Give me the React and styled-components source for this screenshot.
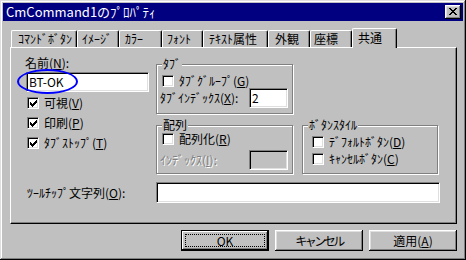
import React from 'react';
import styled, { createGlobalStyle, css } from 'styled-components';

const FONT = `"Noto Sans CJK JP", "Noto Sans", sans-serif`;

const GlobalStyle = createGlobalStyle`
  html, body { margin: 0; padding: 0; background: #c0c0c0; }
  body { font-family: ${FONT}; font-size: 12px; color: #000; }
  * { box-sizing: border-box; }
  u { text-decoration-thickness: 1px; text-underline-offset: 1px; }
`;

const Window = styled.div`
  width: 466px;
  height: 260px;
  background: #c0c0c0;
  padding: 3px;
  box-shadow: inset -1px -1px #000, inset 1px 1px #dfdfdf, inset -2px -2px #808080, inset 2px 2px #fff;
  display: flex;
  flex-direction: column;
`;

const TitleBar = styled.div`
  height: 18px;
  background: #000080;
  color: #fff;
  display: flex;
  align-items: center;
  justify-content: space-between;
  padding: 0 2px 0 3px;
  font-size: 13px;
  line-height: 18px;
  white-space: nowrap;
`;

const raised = css`
  background: #c0c0c0;
  box-shadow: inset -1px -1px #000, inset 1px 1px #fff, inset -2px -2px #808080, inset 2px 2px #dfdfdf;
`;

const sunken = css`
  border: 1px solid;
  border-color: #808080 #fff #fff #808080;
  box-shadow: inset 1px 1px #000, inset -1px -1px #dfdfdf;
`;

const CloseButton = styled.div`
  ${raised};
  width: 16px;
  height: 14px;
  display: flex;
  align-items: center;
  justify-content: center;
  padding: 0 0 1px 0;
`;

const Body = styled.div`
  padding: 7px 0 0 7px;
  display: flex;
  flex-direction: column;
`;

const TabStrip = styled.div`
  height: 19px;
  display: flex;
  align-items: flex-end;
  padding-left: 1px;
`;

const Tab = styled.div`
  width: ${p => p.$w}px;
  height: ${p => (p.$active ? 20 : 17)}px;
  margin-bottom: ${p => (p.$active ? -1 : 0)}px;
  padding-left: ${p => p.$pl ?? 6}px;
  background: #c0c0c0;
  border-top: 1px solid #fff;
  border-left: 1px solid #fff;
  border-right: 1px solid #000;
  border-radius: 2px 2px 0 0;
  box-shadow: inset -1px 0 #808080;
  line-height: ${p => (p.$active ? 17 : 16)}px;
  white-space: nowrap;
  position: relative;
  z-index: ${p => (p.$active ? 2 : 0)};
`;

const Panel = styled.div`
  width: 447px;
  height: 177px;
  border-top: 1px solid #fff;
  border-left: 1px solid #fff;
  border-right: 1px solid #000;
  border-bottom: 1px solid #000;
  box-shadow: inset -1px -1px #808080;
  padding: 8px 0 0 14px;
  display: flex;
  flex-direction: column;
`;

const TopRow = styled.div`
  display: flex;
  align-items: flex-start;
`;

const LeftCol = styled.div`
  width: 131px;
  display: flex;
  flex-direction: column;
`;

const Label = styled.div`
  height: 14px;
  line-height: 14px;
  white-space: nowrap;
  margin-left: ${p => p.$ml ?? 0}px;
`;

const NameField = styled.div`
  position: relative;
  margin: 2px 0 0 1px;
  width: 123px;
  height: 20px;
`;

const TextBox = styled.div`
  ${sunken};
  width: ${p => p.$w}px;
  height: ${p => p.$h ?? 20}px;
  background: ${p => (p.$disabled ? '#c0c0c0' : '#fff')};
  padding: 0 0 0 2px;
  line-height: 18px;
  flex: none;
`;

const Ellipse = styled.div`
  position: absolute;
  left: -9px;
  top: -3px;
  width: 61px;
  height: 25px;
  border: 2px solid #0000ff;
  border-radius: 50%;
  pointer-events: none;
`;

const CheckRow = styled.div`
  display: flex;
  align-items: center;
  height: 14px;
  gap: 5px;
  margin-top: ${p => p.$mt ?? 0}px;
  margin-left: ${p => p.$ml ?? 0}px;
  white-space: nowrap;
  line-height: 14px;
`;

const Box = styled.div`
  ${sunken};
  width: 12px;
  height: 12px;
  background: #fff;
  display: flex;
  align-items: center;
  justify-content: center;
  flex: none;
`;

const MidCol = styled.div`
  width: 137px;
  margin-top: 8px;
  display: flex;
  flex-direction: column;
`;

const RightCol = styled.div`
  width: 136px;
  margin: 69px 0 0 9px;
`;

const Group = styled.div`
  position: relative;
  height: ${p => p.$h}px;
  margin-top: ${p => p.$mt ?? 0}px;
  border: 1px solid #808080;
  box-shadow: inset 1px 1px #fff, 1px 1px #fff;
  display: flex;
  flex-direction: column;
`;

const GroupTitle = styled.div`
  position: absolute;
  left: 5px;
  top: -8px;
  padding: 0 1px;
  background: #c0c0c0;
  line-height: 14px;
  white-space: nowrap;
`;

const FieldRow = styled.div`
  display: flex;
  align-items: center;
  margin-top: ${p => p.$mt ?? 0}px;
  padding-left: ${p => p.$pl ?? 3}px;
`;

const FieldLabel = styled.div`
  width: ${p => p.$w}px;
  white-space: nowrap;
  line-height: 14px;
  flex: none;
  ${p =>
    p.$disabled &&
    css`
      color: #808080;
      text-shadow: 1px 1px 0 #fff;
    `}
`;

const ButtonRow = styled.div`
  width: 447px;
  margin-top: 6px;
  display: flex;
  justify-content: flex-end;
  gap: 6px;
`;

const Button = styled.div`
  ${raised};
  width: 88px;
  height: 21px;
  display: flex;
  align-items: center;
  justify-content: center;
  line-height: 14px;
  position: relative;
  letter-spacing: ${p => p.$ls ?? 0}px;
  ${p =>
    p.$default &&
    css`
      box-shadow: inset 0 0 0 1px #000, inset -2px -2px #000, inset 2px 2px #fff, inset -3px -3px #808080;
    `}
`;

const Focus = styled.div`
  position: absolute;
  inset: 4px;
  border: 1px dotted #000;
  pointer-events: none;
`;

const CHECK = ['......#', '.....##', '#...###', '##.###.', '#####..', '.###...', '..#....'];
const XG = ['##....##', '.##..##.', '..####..', '...##...', '..####..', '.##..##.', '##....##'];

const Pixels = ({ rows }) => (
  <svg width={rows[0].length} height={rows.length} shapeRendering="crispEdges">
    {rows.flatMap((r, y) =>
      r.split('').map((c, x) => (c === '#' ? <rect key={`${x}-${y}`} x={x} y={y} width="1" height="1" fill="#000" /> : null))
    )}
  </svg>
);

const Check = ({ checked, children, mt, ml }) => (
  <CheckRow $mt={mt} $ml={ml}>
    <Box>{checked && <Pixels rows={CHECK} />}</Box>
    <span>{children}</span>
  </CheckRow>
);

const tabs = [
  { t: 'ｺﾏﾝﾄﾞﾎﾞﾀﾝ', w: 66, pl: 6 },
  { t: 'ｲﾒｰｼﾞ', w: 42, pl: 4 },
  { t: 'ｶﾗｰ', w: 43, pl: 5 },
  { t: 'ﾌｫﾝﾄ', w: 41, pl: 4 },
  { t: 'ﾃｷｽﾄ属性', w: 65, pl: 5 },
  { t: '外観', w: 42, pl: 6 },
  { t: '座標', w: 42, pl: 3 },
  { t: '共通', w: 45, pl: 5, active: true },
];

export default function App() {
  return (
    <>
      <GlobalStyle />
      <Window>
        <TitleBar>
          <span>CmCommand1のﾌﾟﾛﾊﾟﾃｨ</span>
          <CloseButton>
            <Pixels rows={XG} />
          </CloseButton>
        </TitleBar>
        <Body>
          <TabStrip>
            {tabs.map(tb => (
              <Tab key={tb.t} $w={tb.w} $pl={tb.pl} $active={tb.active}>
                {tb.t}
              </Tab>
            ))}
          </TabStrip>
          <Panel>
            <TopRow>
              <LeftCol>
                <Label>
                  名前(<u>N</u>):
                </Label>
                <NameField>
                  <TextBox $w={123}>BT-OK</TextBox>
                  <Ellipse />
                </NameField>
                <Check checked mt={4} ml={2}>
                  可視(<u>V</u>)
                </Check>
                <Check checked mt={6} ml={2}>
                  印刷(<u>P</u>)
                </Check>
                <Check checked mt={6} ml={2}>
                  ﾀﾌﾞｽﾄｯﾌﾟ(<u>T</u>)
                </Check>
              </LeftCol>
              <MidCol>
                <Group $h={50}>
                  <GroupTitle>ﾀﾌﾞ</GroupTitle>
                  <Check mt={9} ml={5}>
                    ﾀﾌﾞｸﾞﾙｰﾌﾟ(<u>G</u>)
                  </Check>
                  <FieldRow>
                    <FieldLabel $w={89}>
                      ﾀﾌﾞｲﾝﾃﾞｯｸｽ(<u>X</u>):
                    </FieldLabel>
                    <TextBox $w={39}>2</TextBox>
                  </FieldRow>
                </Group>
                <Group $h={49} $mt={11}>
                  <GroupTitle>配列</GroupTitle>
                  <Check mt={6} ml={5}>
                    配列化(<u>R</u>)
                  </Check>
                  <FieldRow $mt={4}>
                    <FieldLabel $w={89} $disabled>
                      ｲﾝﾃﾞｯｸｽ(<u>I</u>):
                    </FieldLabel>
                    <TextBox $w={39} $disabled />
                  </FieldRow>
                </Group>
              </MidCol>
              <RightCol>
                <Group $h={49}>
                  <GroupTitle>ﾎﾞﾀﾝｽﾀｲﾙ</GroupTitle>
                  <Check mt={9} ml={9}>
                    ﾃﾞﾌｫﾙﾄﾎﾞﾀﾝ(<u>D</u>)
                  </Check>
                  <Check mt={3} ml={9}>
                    ｷｬﾝｾﾙﾎﾞﾀﾝ(<u>C</u>)
                  </Check>
                </Group>
              </RightCol>
            </TopRow>
            <FieldRow $mt={8} $pl={2}>
              <FieldLabel $w={129}>
                ﾂｰﾙﾁｯﾌﾟ文字列(<u>O</u>):
              </FieldLabel>
              <TextBox $w={284} $h={21} />
            </FieldRow>
          </Panel>
          <ButtonRow>
            <Button $default>
              OK
              <Focus />
            </Button>
            <Button $ls={-2.5}>キャンセル</Button>
            <Button>
              適用(<u>A</u>)
            </Button>
          </ButtonRow>
        </Body>
      </Window>
    </>
  );
}
